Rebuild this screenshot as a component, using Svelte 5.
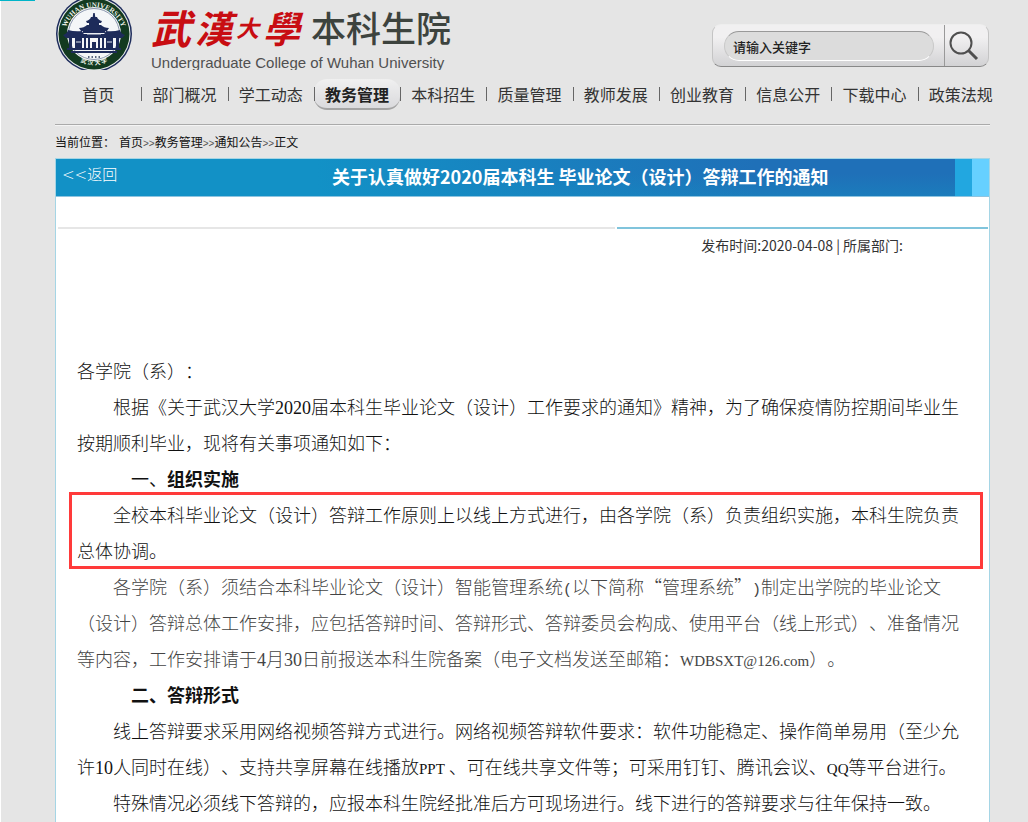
<script lang="ts">
  const nav = ['首页', '部门概况', '学工动态', '教务管理', '本科招生', '质量管理', '教师发展', '创业教育', '信息公开', '下载中心', '政策法规'];
  const current = '教务管理';
  const crumbs = ['首页', '教务管理', '通知公告', '正文'];
  let keyword = $state('请输入关键字');
</script>

<div class="page" lang="zh-CN">
  <div class="accent"></div>
  <header>
    <div class="brand">
      <svg class="emblem" viewBox="0 0 76 70" role="img" aria-label="武汉大学校徽">
        <defs>
          <path id="arc-top" d="M9 36a29 29 0 0 1 58 0" />
          <path id="arc-bottom" d="M14 54a32 32 0 0 0 48 0" />
        </defs>
        <circle cx="38" cy="34" r="38" fill="#1d2c5c" />
        <circle cx="38" cy="34" r="36.500" fill="#e8eceb" />
        <circle cx="38" cy="34" r="35.500" fill="#123a20" />
        <circle cx="38" cy="34" r="27" fill="#f4f6f8" />
        <circle cx="38" cy="34" r="25.500" fill="none" stroke="#8b97ae" stroke-width="1" />
        <g fill="#1d2b5a">
          <path d="M37.300 13h1.400l.6 4h-2.600zM35 17h6q1 3 5 4l-1 2H31l-1-2q4-1 5-4z" />
          <path d="M33 23h10v2H33zM31 25h14q3 3 8 3l-2 3H25l-2-3q5 0 8-3z" />
          <path d="M12 30q7 2 14 1 1 3 4 4l-1 3H10l-3-3q4-1 5-5zM64 30q-7 2-14 1-1 3-4 4l1 3h19l3-3q-4-1-5-5z" />
          <path d="M27 31h22v2H27zM25 34h26v4H25zM13 38h3v11h-3zM60 38h3v11h-3zM19 38h7v11h-7zM50 38h7v11h-7zM28 38h2v11h-2zM46 38h2v11h-2zM32 38h2v11h-2zM42 38h2v11h-2zM36 42h4v7h-4z" />
          <path d="M11 48h54v2H11zM15 51h46v2H15z" />
        </g>
        <path d="M20 42h5M51 42h5M31 34h14" stroke="#dfe5ee" stroke-width="1" />
        <path d="M32 57h12" stroke="#59677f" stroke-width="2" stroke-dasharray="1.500 2" />
        <text class="ring"><textPath href="#arc-top" startOffset="50%" text-anchor="middle">WUHAN UNIVERSITY</textPath></text>
        <text class="ring cn"><textPath href="#arc-bottom" startOffset="50%" text-anchor="middle">武 汉 大 学</textPath></text>
      </svg>
      <div class="titles">
        <div class="names">
          <span class="script"><i class="big">武</i><i class="mid">漢</i><i class="small">大</i><i class="mid">學</i></span>
          <span class="college">本科生院</span>
        </div>
        <div class="english">Undergraduate College of Wuhan University</div>
      </div>
    </div>
    <form class="search" onsubmit={(e) => e.preventDefault()}>
      <input type="text" aria-label="请输入关键字" bind:value={keyword} />
      <button type="submit" aria-label="搜索">
        <svg viewBox="0 0 30 30"><circle cx="12" cy="12" r="10.500" /><path d="M19.500 19.500L28 28" stroke-width="3" /></svg>
      </button>
    </form>
  </header>

  <nav>
    {#each nav as item}
      <a href="#top" class:current={item === current}><span>{item}</span></a>
    {/each}
  </nav>

  <div class="crumbs">
    <span class="here">当前位置：</span>{#each crumbs as c, i}{#if i}<b>&gt;&gt;</b>{/if}<a href="#top">{c}</a>{/each}
  </div>

  <main>
    <div class="banner">
      <a class="back" href="#top"><span>&lt;&lt;</span>返回</a>
      <h1>关于认真做好2020届本科生 毕业论文（设计）答辩工作的通知</h1>
      <div class="blocks"><span></span><span></span></div>
    </div>
    <div class="rule"><span></span><span></span></div>
    <p class="meta">发布时间:2020-04-08 | 所属部门:</p>
    <article>
      <p class="flush">各学院（系）：</p>
      <p>根据《关于武汉大学<span class="num">2020</span>届本科生毕业论文（设计）工作要求的通知》精神，为了确保疫情防控期间毕业生按期顺利毕业，现将有关事项通知如下：</p>
      <h2><span class="one">一、</span>组织实施</h2>
      <p class="marked">全校本科毕业论文（设计）答辩工作原则上以线上方式进行，由各学院（系）负责组织实施，本科生院负责总体协调。</p>
      <p class="soft">各学院（系）须结合本科毕业论文（设计）智能管理系统<span class="paren">(</span>以下简称“管理系统”<span class="paren">)</span>制定出学院的毕业论文（设计）答辩总体工作安排，应包括答辩时间、答辩形式、答辩委员会构成、使用平台（线上形式）、准备情况等内容，工作安排请于<span class="num">4</span>月<span class="num">30</span>日前报送本科生院备案（电子文档发送至邮箱：<span class="word">WDBSXT@126.com</span>）。</p>
      <h2>二、答辩形式</h2>
      <p>线上答辩要求采用网络视频答辩方式进行。网络视频答辩软件要求：软件功能稳定、操作简单易用（至少允许<span class="num">10</span>人同时在线）、支持共享屏幕在线播放<span class="word">PPT</span>&nbsp;、可在线共享文件等；可采用钉钉、腾讯会议、<span class="word">QQ</span>等平台进行。</p>
      <p>特殊情况必须线下答辩的，应报本科生院经批准后方可现场进行。线下进行的答辩要求与往年保持一致。</p>
    </article>
  </main>
</div>

<style>
  :global(body) {
    background: #e5e5e5;
  }
  .page {
    box-sizing: border-box;
    padding: 0 38px 0 54px;
    border-left: 1px solid #fff;
    position: relative;
    font-family: "Noto Sans CJK SC", sans-serif;
    color: #333;
    text-spacing-trim: space-all;
    background: #e5e5e5;
  }
  .accent {
    position: absolute;
    top: 0;
    left: -1px;
    width: 35px;
    height: 1px;
    background: #00b4c8;
  }
  a {
    color: inherit;
    text-decoration: none;
  }
  header {
    display: flex;
    justify-content: space-between;
    height: 70px;
  }
  .brand {
    display: flex;
    gap: 19px;
    padding-left: 1px;
    overflow: hidden;
  }
  .emblem {
    width: 76px;
    height: 70px;
    flex: none;
  }
  .ring {
    font: bold 7px/1 "Liberation Serif", serif;
    fill: #eef2ea;
  }
  .ring.cn {
    font: bold 6px/1 "Noto Sans CJK SC", sans-serif;
  }
  .names {
    display: flex;
    align-items: center;
    gap: 11px;
    height: 54px;
  }
  .script {
    display: flex;
    align-items: center;
    gap: 4px;
    color: #c80d12;
    font-weight: 700;
    line-height: 54px;
  }
  .big {
    font-size: 40px;
  }
  .mid {
    font-size: 37px;
  }
  .small {
    font-size: 23px;
  }
  .college {
    font-size: 35px;
    font-weight: 500;
    line-height: 54px;
    color: #3d433e;
  }
  .english {
    font: 15px/18px "Liberation Sans", Arial, sans-serif;
    color: #505050;
    white-space: nowrap;
  }
  .search {
    box-sizing: border-box;
    display: flex;
    width: 277px;
    height: 43px;
    margin: 24px 1px 0 0;
    border: 1px solid #c4c4c4;
    border-top-color: #eee;
    border-bottom-color: #888;
    border-radius: 9px;
    background: linear-gradient(#f1f0f1 0 30%, #d2d2d4);
  }
  .search input {
    box-sizing: border-box;
    flex: 1;
    min-width: 0;
    height: 30px;
    margin: 6px 10px 0 11px;
    padding: 0 8px;
    border: 1px solid #c8c8c8;
    border-top-color: #999;
    border-bottom-color: #fff;
    border-radius: 15px;
    background: #dcdcdc;
    font: 500 13px "Noto Sans CJK SC", sans-serif;
    color: #222;
  }
  .search button {
    width: 44px;
    padding: 0;
    border: 0;
    border-left: 1px solid #999;
    background: none;
  }
  .search svg {
    width: 30px;
    height: 30px;
    display: block;
    margin: 0 0 0 4px;
    fill: none;
    stroke: #4f4f4f;
    stroke-width: 2;
  }
  nav {
    display: grid;
    grid-template-columns: repeat(11, 1fr);
    height: 54px;
    margin-right: -14px;
    padding-top: 9px;
    box-sizing: border-box;
    font-size: 16px;
    line-height: 30px;
  }
  nav a {
    position: relative;
    height: 30px;
    text-align: center;
    white-space: nowrap;
  }
  nav a + a::before {
    content: "";
    position: absolute;
    left: 0;
    top: 8px;
    height: 14px;
    border-left: 1px solid #666;
  }
  .current span {
    display: block;
    border-radius: 13px;
    border-bottom: 2px solid #a4a4a4;
    box-sizing: border-box;
    height: 31px;
    background: linear-gradient(#f0f0f0, #dadadd);
    font-weight: 700;
    color: #222;
  }
  .crumbs {
    height: 34px;
    box-sizing: border-box;
    padding-top: 7px;
    border-top: 1px solid #aaa;
    box-shadow: inset 0 1px #f4f4f4;
    font-size: 12px;
    line-height: 20px;
    color: #111;
  }
  .here {
    margin-right: 4px;
  }
  .crumbs b {
    font: 10px/1 "Liberation Sans", sans-serif;
    color: #555;
  }
  main {
    border: solid #a5d5e5;
    border-width: 1px 1px 0;
    background: #fff;
  }
  .banner {
    display: flex;
    height: 37px;
    border-bottom: 1px solid #8ec4e0;
    background: linear-gradient(172deg, #1291c6 25%, #1f70b8 85%);
    background: linear-gradient(to right, #1291c6 28%, transparent 75%), linear-gradient(#1f70b8 40%, #1b7cbc);
    color: #fff;
  }
  .back {
    width: 276px;
    padding-left: 6px;
    box-sizing: border-box;
    font-size: 15px;
    line-height: 30px;
    font-weight: 300;
  }
  .back span {
    font-family: "DejaVu Sans", sans-serif;
    line-height: 1;
  }
  h1 {
    flex: 1;
    margin: 0;
    font-size: 18px;
    line-height: 35px;
    font-weight: 700;
    white-space: nowrap;
  }
  .blocks {
    display: grid;
    grid-template-columns: 17px 17px;
  }
  .blocks span {
    background: #22a7e0;
  }
  .blocks span + span {
    background: #66d0ff;
  }
  .rule {
    display: grid;
    grid-template-columns: 3fr 2fr;
    gap: 2px;
    margin: 30px 1px 0 2px;
  }
  .rule span {
    height: 2px;
    background: #e6e6e6;
  }
  .rule span + span {
    background: #80c4dc;
  }
  .meta {
    margin: 0;
    padding: 3px 86px 0 0;
    text-align: right;
    font-size: 14px;
    line-height: 26px;
  }
  article {
    padding: 94px 25px 12px 21px;
    font-size: 18px;
    line-height: 36px;
    color: #111;
    font-weight: 300;
  }
  article p {
    margin: 0;
    text-indent: 36px;
  }
  article .flush {
    text-indent: 0;
  }
  .num {
    font-family: "Liberation Serif", serif;
    line-height: 1;
  }
  .word {
    font-family: "Liberation Serif", serif;
    font-size: 15px;
    line-height: 1;
  }
  .paren {
    font-family: "Liberation Mono", monospace;
    font-size: 15px;
    line-height: 1;
  }
  .soft {
    color: #444;
  }
  h2 {
    margin: 0;
    padding-left: 54px;
    font-size: 18px;
    font-weight: 700;
  }
  .one {
    font-weight: 400;
  }
  article .marked {
    position: relative;
  }
  .marked::after {
    content: "";
    position: absolute;
    inset: -4px -19px -1px -8px;
    border: 3px solid #ff3a3a;
  }
</style>
